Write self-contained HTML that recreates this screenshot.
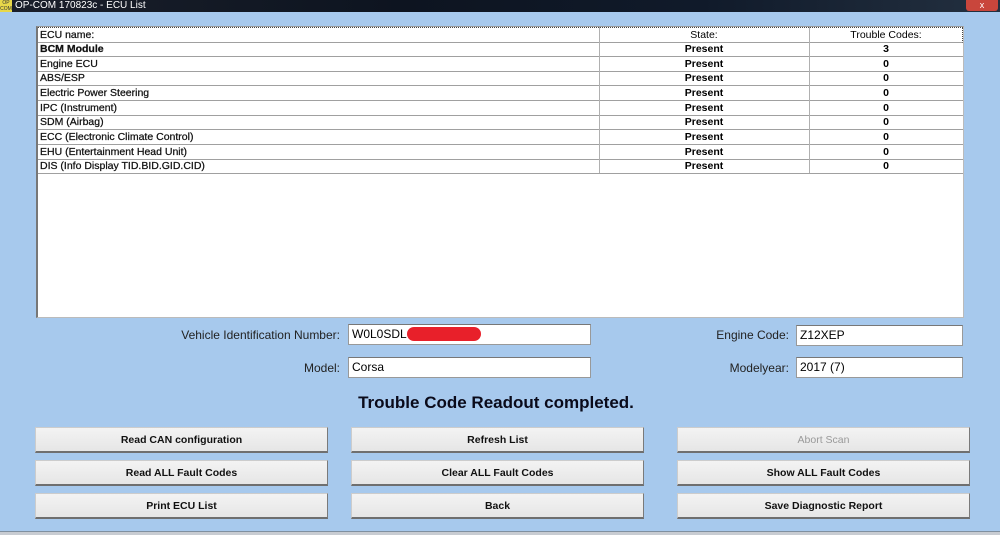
<!DOCTYPE html>
<html><head><style>
body{margin:0;width:1000px;height:534px;background:#a7c9ed;font-family:"Liberation Sans",sans-serif;position:relative;overflow:hidden}
.tb{position:absolute;left:0;top:0;width:1000px;height:12px;background:linear-gradient(90deg,#1a1f2a,#0d1420 40%,#101a2a 70%,#233040);color:#fff;font-size:10px;line-height:12px}
.ic{position:absolute;left:0;top:0;width:12px;height:12px;background:#e8d84a;color:#333;font-size:5px;line-height:6px;text-align:center}
.x{position:absolute;right:2px;top:0;width:32px;height:11px;background:#c9463c;color:#fff;font-size:9px;text-align:center;line-height:11px;border-radius:0 0 3px 3px}
.tbl{position:absolute;left:36px;top:26px;width:925px;height:290px;background:#fff;border-left:2px solid #777;border-top:1px solid #999;border-right:1px solid #bbb;border-bottom:1px solid #bbb}
.r{position:absolute;left:0;width:925px;height:14px;border-bottom:1px solid #a0a0a0;font-size:10.5px;line-height:14px;color:#000}
.r span{position:absolute;top:0}
.c1{left:2px;color:#111;-webkit-text-stroke:0.25px #111}.c2{left:561px;width:210px;text-align:center;font-weight:bold}.c3{left:771px;width:154px;text-align:center;font-weight:bold}
.hd{border-top:1px dotted #444;border-right:1px dotted #444;width:924px}
.vl{position:absolute;top:0;height:146px;width:1px;background:#b0b0b0}
.lab{position:absolute;font-size:12px;color:#222;text-align:right}
.in{position:absolute;background:#fff;border:1px solid #999;border-top-color:#777;font-size:12px;line-height:19px;padding-left:3px;box-sizing:border-box;height:21px}
.btn{position:absolute;width:293px;height:26px;background:linear-gradient(#f3f3f3,#e6e6e6);border:1px solid #ccc;border-right-color:#7a7a7a;border-bottom:2px solid #6f6f6f;box-sizing:border-box;font-size:10.5px;font-weight:bold;text-align:center;line-height:24px;color:#111}
</style></head><body>
<div class="tb"><div class="ic">OP<br>COM</div><span style="position:absolute;left:15px">OP-COM 170823c - ECU List</span><div class="x">x</div></div>
<div class="tbl">
<div class="r hd" style="top:0"><span class="c1">ECU name:</span><span class="c2" style="font-weight:normal">State:</span><span class="c3" style="font-weight:normal">Trouble Codes:</span></div>
<div class="r" style="top:15px"><span class="c1" style="font-weight:bold">BCM Module</span><span class="c2">Present</span><span class="c3">3</span></div>
<div class="r" style="top:30px"><span class="c1">Engine ECU</span><span class="c2">Present</span><span class="c3">0</span></div>
<div class="r" style="top:44px"><span class="c1">ABS/ESP</span><span class="c2">Present</span><span class="c3">0</span></div>
<div class="r" style="top:59px"><span class="c1">Electric Power Steering</span><span class="c2">Present</span><span class="c3">0</span></div>
<div class="r" style="top:74px"><span class="c1">IPC (Instrument)</span><span class="c2">Present</span><span class="c3">0</span></div>
<div class="r" style="top:88px"><span class="c1">SDM (Airbag)</span><span class="c2">Present</span><span class="c3">0</span></div>
<div class="r" style="top:103px"><span class="c1">ECC (Electronic Climate Control)</span><span class="c2">Present</span><span class="c3">0</span></div>
<div class="r" style="top:118px"><span class="c1">EHU (Entertainment Head Unit)</span><span class="c2">Present</span><span class="c3">0</span></div>
<div class="r" style="top:132px"><span class="c1">DIS (Info Display TID.BID.GID.CID)</span><span class="c2">Present</span><span class="c3">0</span></div>
<div class="vl" style="left:561px"></div><div class="vl" style="left:771px"></div>
</div>
<div class="lab" style="right:660px;top:328px">Vehicle Identification Number:</div>
<div class="in" style="left:348px;top:324px;width:243px">W0L0SDL<span style="display:inline-block;width:74px;height:14px;background:#e8202a;border-radius:7px;vertical-align:-3px"></span></div>
<div class="lab" style="right:660px;top:361px">Model:</div>
<div class="in" style="left:348px;top:357px;width:243px">Corsa</div>
<div class="lab" style="right:211px;top:328px">Engine Code:</div>
<div class="in" style="left:796px;top:325px;width:167px">Z12XEP</div>
<div class="lab" style="right:211px;top:361px">Modelyear:</div>
<div class="in" style="left:796px;top:357px;width:167px">2017 (7)</div>
<div style="position:absolute;left:0;width:992px;text-align:center;top:393px;font-size:17px;font-weight:bold;color:#0a0a1a">Trouble Code Readout completed.</div>
<div class="btn" style="left:35px;top:427px">Read CAN configuration</div>
<div class="btn" style="left:351px;top:427px">Refresh List</div>
<div class="btn" style="left:677px;top:427px;color:#999;font-weight:normal">Abort Scan</div>
<div class="btn" style="left:35px;top:460px">Read ALL Fault Codes</div>
<div class="btn" style="left:351px;top:460px">Clear ALL Fault Codes</div>
<div class="btn" style="left:677px;top:460px">Show ALL Fault Codes</div>
<div class="btn" style="left:35px;top:493px">Print ECU List</div>
<div class="btn" style="left:351px;top:493px">Back</div>
<div class="btn" style="left:677px;top:493px">Save Diagnostic Report</div>
<div style="position:absolute;left:0;top:531px;width:1000px;height:3px;background:#c8ccd2;border-top:1px solid #8090a0"></div>
</body></html>
